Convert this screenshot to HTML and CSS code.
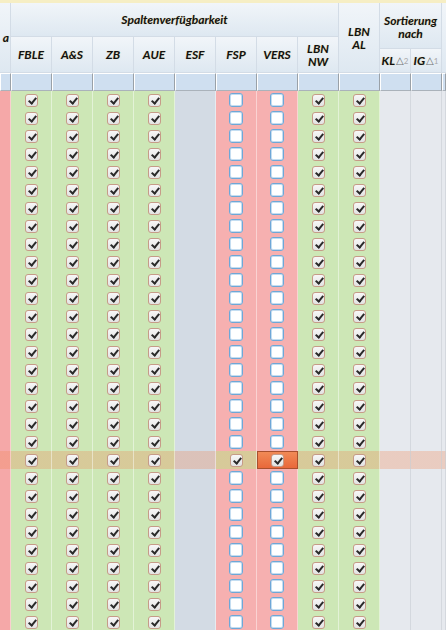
FILE: index.html
```html
<!DOCTYPE html>
<html lang="de">
<head>
<meta charset="utf-8">
<title>Spaltenverfügbarkeit</title>
<link rel="stylesheet" href="styles.css">
</head>
<body>
<div class="topstrip"></div>
<div class="head grid">
  <div class="h h-lead"><span>a</span></div>
  <div class="h h-group">Spaltenverfügbarkeit</div>
  <div class="h h-lbnal">LBN<br>AL</div>
  <div class="h h-sort">Sortierung<br>nach</div>
  <div class="h h-fill"></div>
  <div class="h h-col">FBLE</div>
  <div class="h h-col">A&amp;S</div>
  <div class="h h-col">ZB</div>
  <div class="h h-col">AUE</div>
  <div class="h h-col">ESF</div>
  <div class="h h-col">FSP</div>
  <div class="h h-col">VERS</div>
  <div class="h h-col">LBN<br>NW</div>
  <div class="h h-sub">KL<span class="tri">△</span><sup>2</sup></div>
  <div class="h h-sub">IG<span class="tri">△</span><sup>1</sup></div>
  <div class="f"></div><div class="f"></div><div class="f"></div><div class="f"></div><div class="f"></div><div class="f"></div><div class="f"></div><div class="f"></div><div class="f"></div><div class="f"></div><div class="f"></div><div class="f"></div><div class="f"></div>
</div>
<div class="body">
<div class="row grid"><div class="c lead"></div><div class="c g"><i class="cb"></i></div><div class="c g"><i class="cb"></i></div><div class="c g"><i class="cb"></i></div><div class="c g"><i class="cb"></i></div><div class="c e"></div><div class="c r"><i class="cb off"></i></div><div class="c r"><i class="cb off"></i></div><div class="c g"><i class="cb"></i></div><div class="c g"><i class="cb"></i></div><div class="c s"></div><div class="c s"></div><div class="c s"></div></div>
<div class="row grid"><div class="c lead"></div><div class="c g"><i class="cb"></i></div><div class="c g"><i class="cb"></i></div><div class="c g"><i class="cb"></i></div><div class="c g"><i class="cb"></i></div><div class="c e"></div><div class="c r"><i class="cb off"></i></div><div class="c r"><i class="cb off"></i></div><div class="c g"><i class="cb"></i></div><div class="c g"><i class="cb"></i></div><div class="c s"></div><div class="c s"></div><div class="c s"></div></div>
<div class="row grid"><div class="c lead"></div><div class="c g"><i class="cb"></i></div><div class="c g"><i class="cb"></i></div><div class="c g"><i class="cb"></i></div><div class="c g"><i class="cb"></i></div><div class="c e"></div><div class="c r"><i class="cb off"></i></div><div class="c r"><i class="cb off"></i></div><div class="c g"><i class="cb"></i></div><div class="c g"><i class="cb"></i></div><div class="c s"></div><div class="c s"></div><div class="c s"></div></div>
<div class="row grid"><div class="c lead"></div><div class="c g"><i class="cb"></i></div><div class="c g"><i class="cb"></i></div><div class="c g"><i class="cb"></i></div><div class="c g"><i class="cb"></i></div><div class="c e"></div><div class="c r"><i class="cb off"></i></div><div class="c r"><i class="cb off"></i></div><div class="c g"><i class="cb"></i></div><div class="c g"><i class="cb"></i></div><div class="c s"></div><div class="c s"></div><div class="c s"></div></div>
<div class="row grid"><div class="c lead"></div><div class="c g"><i class="cb"></i></div><div class="c g"><i class="cb"></i></div><div class="c g"><i class="cb"></i></div><div class="c g"><i class="cb"></i></div><div class="c e"></div><div class="c r"><i class="cb off"></i></div><div class="c r"><i class="cb off"></i></div><div class="c g"><i class="cb"></i></div><div class="c g"><i class="cb"></i></div><div class="c s"></div><div class="c s"></div><div class="c s"></div></div>
<div class="row grid"><div class="c lead"></div><div class="c g"><i class="cb"></i></div><div class="c g"><i class="cb"></i></div><div class="c g"><i class="cb"></i></div><div class="c g"><i class="cb"></i></div><div class="c e"></div><div class="c r"><i class="cb off"></i></div><div class="c r"><i class="cb off"></i></div><div class="c g"><i class="cb"></i></div><div class="c g"><i class="cb"></i></div><div class="c s"></div><div class="c s"></div><div class="c s"></div></div>
<div class="row grid"><div class="c lead"></div><div class="c g"><i class="cb"></i></div><div class="c g"><i class="cb"></i></div><div class="c g"><i class="cb"></i></div><div class="c g"><i class="cb"></i></div><div class="c e"></div><div class="c r"><i class="cb off"></i></div><div class="c r"><i class="cb off"></i></div><div class="c g"><i class="cb"></i></div><div class="c g"><i class="cb"></i></div><div class="c s"></div><div class="c s"></div><div class="c s"></div></div>
<div class="row grid"><div class="c lead"></div><div class="c g"><i class="cb"></i></div><div class="c g"><i class="cb"></i></div><div class="c g"><i class="cb"></i></div><div class="c g"><i class="cb"></i></div><div class="c e"></div><div class="c r"><i class="cb off"></i></div><div class="c r"><i class="cb off"></i></div><div class="c g"><i class="cb"></i></div><div class="c g"><i class="cb"></i></div><div class="c s"></div><div class="c s"></div><div class="c s"></div></div>
<div class="row grid"><div class="c lead"></div><div class="c g"><i class="cb"></i></div><div class="c g"><i class="cb"></i></div><div class="c g"><i class="cb"></i></div><div class="c g"><i class="cb"></i></div><div class="c e"></div><div class="c r"><i class="cb off"></i></div><div class="c r"><i class="cb off"></i></div><div class="c g"><i class="cb"></i></div><div class="c g"><i class="cb"></i></div><div class="c s"></div><div class="c s"></div><div class="c s"></div></div>
<div class="row grid"><div class="c lead"></div><div class="c g"><i class="cb"></i></div><div class="c g"><i class="cb"></i></div><div class="c g"><i class="cb"></i></div><div class="c g"><i class="cb"></i></div><div class="c e"></div><div class="c r"><i class="cb off"></i></div><div class="c r"><i class="cb off"></i></div><div class="c g"><i class="cb"></i></div><div class="c g"><i class="cb"></i></div><div class="c s"></div><div class="c s"></div><div class="c s"></div></div>
<div class="row grid"><div class="c lead"></div><div class="c g"><i class="cb"></i></div><div class="c g"><i class="cb"></i></div><div class="c g"><i class="cb"></i></div><div class="c g"><i class="cb"></i></div><div class="c e"></div><div class="c r"><i class="cb off"></i></div><div class="c r"><i class="cb off"></i></div><div class="c g"><i class="cb"></i></div><div class="c g"><i class="cb"></i></div><div class="c s"></div><div class="c s"></div><div class="c s"></div></div>
<div class="row grid"><div class="c lead"></div><div class="c g"><i class="cb"></i></div><div class="c g"><i class="cb"></i></div><div class="c g"><i class="cb"></i></div><div class="c g"><i class="cb"></i></div><div class="c e"></div><div class="c r"><i class="cb off"></i></div><div class="c r"><i class="cb off"></i></div><div class="c g"><i class="cb"></i></div><div class="c g"><i class="cb"></i></div><div class="c s"></div><div class="c s"></div><div class="c s"></div></div>
<div class="row grid"><div class="c lead"></div><div class="c g"><i class="cb"></i></div><div class="c g"><i class="cb"></i></div><div class="c g"><i class="cb"></i></div><div class="c g"><i class="cb"></i></div><div class="c e"></div><div class="c r"><i class="cb off"></i></div><div class="c r"><i class="cb off"></i></div><div class="c g"><i class="cb"></i></div><div class="c g"><i class="cb"></i></div><div class="c s"></div><div class="c s"></div><div class="c s"></div></div>
<div class="row grid"><div class="c lead"></div><div class="c g"><i class="cb"></i></div><div class="c g"><i class="cb"></i></div><div class="c g"><i class="cb"></i></div><div class="c g"><i class="cb"></i></div><div class="c e"></div><div class="c r"><i class="cb off"></i></div><div class="c r"><i class="cb off"></i></div><div class="c g"><i class="cb"></i></div><div class="c g"><i class="cb"></i></div><div class="c s"></div><div class="c s"></div><div class="c s"></div></div>
<div class="row grid"><div class="c lead"></div><div class="c g"><i class="cb"></i></div><div class="c g"><i class="cb"></i></div><div class="c g"><i class="cb"></i></div><div class="c g"><i class="cb"></i></div><div class="c e"></div><div class="c r"><i class="cb off"></i></div><div class="c r"><i class="cb off"></i></div><div class="c g"><i class="cb"></i></div><div class="c g"><i class="cb"></i></div><div class="c s"></div><div class="c s"></div><div class="c s"></div></div>
<div class="row grid"><div class="c lead"></div><div class="c g"><i class="cb"></i></div><div class="c g"><i class="cb"></i></div><div class="c g"><i class="cb"></i></div><div class="c g"><i class="cb"></i></div><div class="c e"></div><div class="c r"><i class="cb off"></i></div><div class="c r"><i class="cb off"></i></div><div class="c g"><i class="cb"></i></div><div class="c g"><i class="cb"></i></div><div class="c s"></div><div class="c s"></div><div class="c s"></div></div>
<div class="row grid"><div class="c lead"></div><div class="c g"><i class="cb"></i></div><div class="c g"><i class="cb"></i></div><div class="c g"><i class="cb"></i></div><div class="c g"><i class="cb"></i></div><div class="c e"></div><div class="c r"><i class="cb off"></i></div><div class="c r"><i class="cb off"></i></div><div class="c g"><i class="cb"></i></div><div class="c g"><i class="cb"></i></div><div class="c s"></div><div class="c s"></div><div class="c s"></div></div>
<div class="row grid"><div class="c lead"></div><div class="c g"><i class="cb"></i></div><div class="c g"><i class="cb"></i></div><div class="c g"><i class="cb"></i></div><div class="c g"><i class="cb"></i></div><div class="c e"></div><div class="c r"><i class="cb off"></i></div><div class="c r"><i class="cb off"></i></div><div class="c g"><i class="cb"></i></div><div class="c g"><i class="cb"></i></div><div class="c s"></div><div class="c s"></div><div class="c s"></div></div>
<div class="row grid"><div class="c lead"></div><div class="c g"><i class="cb"></i></div><div class="c g"><i class="cb"></i></div><div class="c g"><i class="cb"></i></div><div class="c g"><i class="cb"></i></div><div class="c e"></div><div class="c r"><i class="cb off"></i></div><div class="c r"><i class="cb off"></i></div><div class="c g"><i class="cb"></i></div><div class="c g"><i class="cb"></i></div><div class="c s"></div><div class="c s"></div><div class="c s"></div></div>
<div class="row grid"><div class="c lead"></div><div class="c g"><i class="cb"></i></div><div class="c g"><i class="cb"></i></div><div class="c g"><i class="cb"></i></div><div class="c g"><i class="cb"></i></div><div class="c e"></div><div class="c r"><i class="cb off"></i></div><div class="c r"><i class="cb off"></i></div><div class="c g"><i class="cb"></i></div><div class="c g"><i class="cb"></i></div><div class="c s"></div><div class="c s"></div><div class="c s"></div></div>
<div class="row grid hl"><div class="c lead"></div><div class="c g"><i class="cb"></i></div><div class="c g"><i class="cb"></i></div><div class="c g"><i class="cb"></i></div><div class="c g"><i class="cb"></i></div><div class="c e"></div><div class="c g"><i class="cb"></i></div><div class="c focus"><i class="cb"></i></div><div class="c g"><i class="cb"></i></div><div class="c g"><i class="cb"></i></div><div class="c s"></div><div class="c s"></div><div class="c s"></div></div>
<div class="row grid"><div class="c lead"></div><div class="c g"><i class="cb"></i></div><div class="c g"><i class="cb"></i></div><div class="c g"><i class="cb"></i></div><div class="c g"><i class="cb"></i></div><div class="c e"></div><div class="c r"><i class="cb off"></i></div><div class="c r"><i class="cb off"></i></div><div class="c g"><i class="cb"></i></div><div class="c g"><i class="cb"></i></div><div class="c s"></div><div class="c s"></div><div class="c s"></div></div>
<div class="row grid"><div class="c lead"></div><div class="c g"><i class="cb"></i></div><div class="c g"><i class="cb"></i></div><div class="c g"><i class="cb"></i></div><div class="c g"><i class="cb"></i></div><div class="c e"></div><div class="c r"><i class="cb off"></i></div><div class="c r"><i class="cb off"></i></div><div class="c g"><i class="cb"></i></div><div class="c g"><i class="cb"></i></div><div class="c s"></div><div class="c s"></div><div class="c s"></div></div>
<div class="row grid"><div class="c lead"></div><div class="c g"><i class="cb"></i></div><div class="c g"><i class="cb"></i></div><div class="c g"><i class="cb"></i></div><div class="c g"><i class="cb"></i></div><div class="c e"></div><div class="c r"><i class="cb off"></i></div><div class="c r"><i class="cb off"></i></div><div class="c g"><i class="cb"></i></div><div class="c g"><i class="cb"></i></div><div class="c s"></div><div class="c s"></div><div class="c s"></div></div>
<div class="row grid"><div class="c lead"></div><div class="c g"><i class="cb"></i></div><div class="c g"><i class="cb"></i></div><div class="c g"><i class="cb"></i></div><div class="c g"><i class="cb"></i></div><div class="c e"></div><div class="c r"><i class="cb off"></i></div><div class="c r"><i class="cb off"></i></div><div class="c g"><i class="cb"></i></div><div class="c g"><i class="cb"></i></div><div class="c s"></div><div class="c s"></div><div class="c s"></div></div>
<div class="row grid"><div class="c lead"></div><div class="c g"><i class="cb"></i></div><div class="c g"><i class="cb"></i></div><div class="c g"><i class="cb"></i></div><div class="c g"><i class="cb"></i></div><div class="c e"></div><div class="c r"><i class="cb off"></i></div><div class="c r"><i class="cb off"></i></div><div class="c g"><i class="cb"></i></div><div class="c g"><i class="cb"></i></div><div class="c s"></div><div class="c s"></div><div class="c s"></div></div>
<div class="row grid"><div class="c lead"></div><div class="c g"><i class="cb"></i></div><div class="c g"><i class="cb"></i></div><div class="c g"><i class="cb"></i></div><div class="c g"><i class="cb"></i></div><div class="c e"></div><div class="c r"><i class="cb off"></i></div><div class="c r"><i class="cb off"></i></div><div class="c g"><i class="cb"></i></div><div class="c g"><i class="cb"></i></div><div class="c s"></div><div class="c s"></div><div class="c s"></div></div>
<div class="row grid"><div class="c lead"></div><div class="c g"><i class="cb"></i></div><div class="c g"><i class="cb"></i></div><div class="c g"><i class="cb"></i></div><div class="c g"><i class="cb"></i></div><div class="c e"></div><div class="c r"><i class="cb off"></i></div><div class="c r"><i class="cb off"></i></div><div class="c g"><i class="cb"></i></div><div class="c g"><i class="cb"></i></div><div class="c s"></div><div class="c s"></div><div class="c s"></div></div>
<div class="row grid"><div class="c lead"></div><div class="c g"><i class="cb"></i></div><div class="c g"><i class="cb"></i></div><div class="c g"><i class="cb"></i></div><div class="c g"><i class="cb"></i></div><div class="c e"></div><div class="c r"><i class="cb off"></i></div><div class="c r"><i class="cb off"></i></div><div class="c g"><i class="cb"></i></div><div class="c g"><i class="cb"></i></div><div class="c s"></div><div class="c s"></div><div class="c s"></div></div>
<div class="row grid"><div class="c lead"></div><div class="c g"><i class="cb"></i></div><div class="c g"><i class="cb"></i></div><div class="c g"><i class="cb"></i></div><div class="c g"><i class="cb"></i></div><div class="c e"></div><div class="c r"><i class="cb off"></i></div><div class="c r"><i class="cb off"></i></div><div class="c g"><i class="cb"></i></div><div class="c g"><i class="cb"></i></div><div class="c s"></div><div class="c s"></div><div class="c s"></div></div>
</div>
</body>
</html>
```
FILE: styles.css
```css
html, body {
  margin: 0;
  padding: 0;
  overflow: hidden;
  background: #e6e9ee;
}
body {
  width: 446px;
  height: 630px;
  font-family: Lato, "Liberation Sans", sans-serif;
}
.topstrip {
  height: 3px;
  background: #f6eec4;
}
.grid {
  display: grid;
  grid-template-columns: 11px repeat(9, 41px) 31px 31px 1fr;
}
.head {
  grid-template-rows: 34px 12px 24px 18px;
}
.h {
  box-sizing: border-box;
  border-right: 1px solid #d3dce6;
  border-bottom: 1px solid #d3dce6;
  background: linear-gradient(#f1f5f9, #dee8f1);
  display: flex;
  align-items: center;
  justify-content: center;
  text-align: center;
  font-weight: 700;
  font-style: italic;
  font-size: 12px;
  line-height: 13px;
  color: #111111;
  text-shadow: 0 0 1px rgba(214, 176, 60, 0.5);
  overflow: hidden;
  white-space: nowrap;
}
.h-lead {
  grid-column: 1;
  grid-row: 1 / 4;
  justify-content: flex-end;
  padding-right: 1px;
}
.h-group {
  grid-column: 2 / 10;
  grid-row: 1;
}
.h-lbnal {
  grid-column: 10;
  grid-row: 1 / 4;
}
.h-sort {
  grid-column: 11 / 13;
  grid-row: 1 / 3;
  padding-top: 2px;
}
.h-fill {
  grid-column: 13;
  grid-row: 1 / 4;
  border-right: none;
}
.h-col {
  grid-row: 2 / 4;
}
.h-sub {
  grid-row: 3;
}
.h-sub .tri {
  font-style: normal;
  font-weight: 400;
  font-size: 10px;
  color: #6e6e6e;
  text-shadow: none;
  margin-left: 1px;
  font-family: "DejaVu Sans", sans-serif;
}
.h-sub sup {
  font-style: normal;
  font-weight: 400;
  font-size: 8px;
  color: #a8a8a8;
  text-shadow: none;
  vertical-align: 3px;
  line-height: 0;
}
.f {
  grid-row: 4;
  box-sizing: border-box;
  background: #cfdff0;
  border-top: 1px solid #ffffff;
  border-left: 1px solid #ffffff;
  border-right: 1px solid #9aa1a8;
  border-bottom: 1px solid #aab2ba;
}
.row {
  height: 18px;
}
.c {
  box-sizing: border-box;
  border-right: 1px solid rgba(255, 255, 255, 0.45);
  display: flex;
  align-items: center;
  justify-content: center;
}
.lead { background: #f5a8a8; }
.g { background: #cde7b6; }
.r { background: #f6b0b0; }
.e { background: #d3dbe4; }
.s { background: #e6e9ee; border-right-color: rgba(200, 205, 212, 0.6); }
.hl .c {
  background-image: linear-gradient(rgba(240, 136, 88, 0.3), rgba(240, 136, 88, 0.3));
}
.hl .c.focus {
  background: linear-gradient(#f18a56, #e9683a);
  border: 1px solid #a9502e;
}
.cb {
  position: relative;
  display: block;
  box-sizing: border-box;
  width: 13px;
  height: 13px;
  border: 1px solid #c69b88;
  border-radius: 3px;
  background: linear-gradient(#f7f7f7, #e3e3e3);
}
.cb::after {
  content: "";
  position: absolute;
  left: 4px;
  top: 1px;
  width: 3px;
  height: 6px;
  border: solid #2a2a2a;
  border-width: 0 2px 2px 0;
  transform: rotate(40deg);
}
.cb.off {
  width: 14px;
  height: 14px;
  border: 1px solid #6ea7d7;
  background: #ffffff;
  box-shadow: inset 0 0 0 1px #c4ddf1;
}
.cb.off::after {
  display: none;
}
```
